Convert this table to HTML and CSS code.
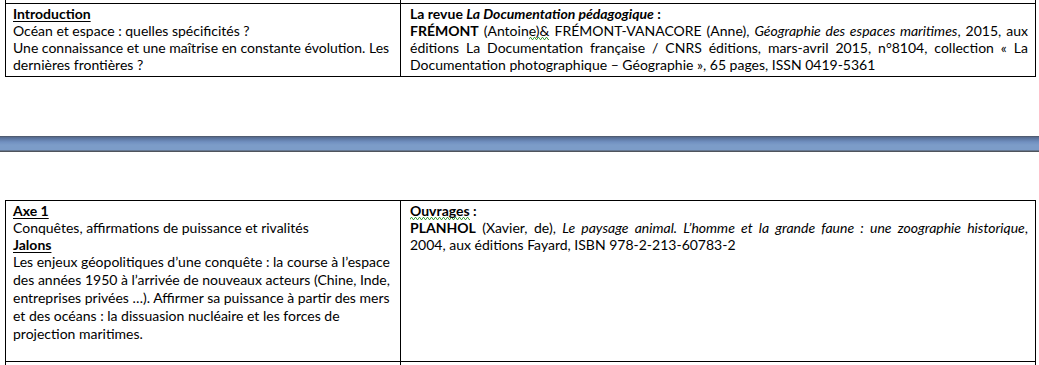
FILE: index.html
```html
<!DOCTYPE html>
<html lang="fr">
<head>
<meta charset="utf-8">
<title>Océan et espace</title>
<link rel="stylesheet" href="styles.css">
</head>
<body>
<table class="doc doc-top">
  <colgroup><col class="col-l"><col class="col-r"></colgroup>
  <tr class="stub"><td></td><td></td></tr>
  <tr class="row-intro">
    <td class="cell-l">
      <div class="heading">Introduction</div>
      <div>Océan et espace : quelles spécificités ?</div>
      <div>Une connaissance et une maîtrise en constante évolution. Les<br>dernières frontières ?</div>
    </td>
    <td class="cell-r">
      <div class="bold">La revue <i>La Documentation pédagogique</i> :</div>
      <div class="just">
        <span class="jl"><b>FRÉMONT</b> (Antoin<span class="spell">e)&amp;</span> FRÉMONT-VANACORE (Anne), <i>Géographie des espaces maritimes</i>, 2015, aux</span>
        <span class="jl">éditions La Documentation française / CNRS éditions, mars-avril 2015, n°8104, collection « La</span>
        <span class="ll">Documentation photographique – Géographie », 65 pages, ISSN 0419-5361</span>
      </div>
    </td>
  </tr>
</table>

<div class="page-gap"></div>

<table class="doc doc-bottom">
  <colgroup><col class="col-l"><col class="col-r"></colgroup>
  <tr class="row-axe">
    <td class="cell-l">
      <div class="heading">Axe 1</div>
      <div>Conquêtes, affirmations de puissance et rivalités</div>
      <div class="heading">Jalons</div>
      <div class="jalons">Les enjeux géopolitiques d’une conquête : la course à l’espace<br>des années 1950 à l’arrivée de nouveaux acteurs (Chine, Inde,<br>entreprises privées …). Affirmer sa puissance à partir des mers<br>et des océans : la dissuasion nucléaire et les forces de<br>projection maritimes.</div>
    </td>
    <td class="cell-r">
      <div class="bold"><span class="spell">Ouvrages</span> :</div>
      <div class="just">
        <span class="jl"><b>PLANHOL</b> (Xavier, de), <i>Le paysage animal. L’homme et la grande faune : une zoographie historique</i>,</span>
        <span class="ll">2004, aux éditions Fayard, ISBN 978-2-213-60783-2</span>
      </div>
    </td>
  </tr>
  <tr class="stub-end"><td></td><td></td></tr>
</table>
</body>
</html>
```

FILE: styles.css
```css
html, body {
  margin: 0;
  padding: 0;
  background: #ffffff;
}

body {
  font-family: Lato, "Liberation Sans", sans-serif;
  font-size: 14px;
  line-height: 17px;
  color: #000000;
  overflow: hidden;
}

.doc {
  border-collapse: collapse;
  table-layout: fixed;
  width: 1030px;
  margin-left: 5px;
}

.col-l { width: 395px; }
.col-r { width: 635px; }

.doc td {
  border: 1px solid #000000;
  vertical-align: top;
  padding: 0;
}

.stub td {
  height: 3px;
  border-top: 0;
}

.cell-l {
  padding: 1px 6px 3px 7px !important;
}

.cell-r {
  padding: 1px 7px 3px 9px !important;
}

.row-axe .cell-l,
.row-axe .cell-r {
  padding-bottom: 18px !important;
}

.stub-end td {
  height: 10px;
  border-bottom: 0;
}

.heading {
  font-weight: 700;
  text-decoration: underline;
  text-underline-offset: 2px;
}

.bold {
  font-weight: 700;
}

.just {
  text-align: justify;
}

.jl {
  display: block;
  text-align: justify;
  text-align-last: justify;
}

.ll {
  display: block;
}

.jalons {
  line-height: 18px;
}

.spell {
  text-decoration: none;
  background-image: url("data:image/svg+xml,%3Csvg xmlns='http://www.w3.org/2000/svg' width='4' height='3'%3E%3Cpath d='M0 2.5 L1 0.5 L2 0.5 L3 2.5 L4 2.5' fill='none' stroke='%2340a040' stroke-width='1'/%3E%3C/svg%3E");
  background-repeat: repeat-x;
  background-position: left bottom;
  background-size: 4px 3px;
  padding-bottom: 1px;
}

.page-gap {
  height: 16px;
  margin: 59px 0 48px;
  background: linear-gradient(to bottom,
    #4b5059 0px,
    #56698a 1px,
    #5f7aa5 3px,
    #7190c0 6px,
    #7c9cc8 9px,
    #7c9cc8 14px,
    #4f545c 15px,
    #4f545c 16px);
}
```
